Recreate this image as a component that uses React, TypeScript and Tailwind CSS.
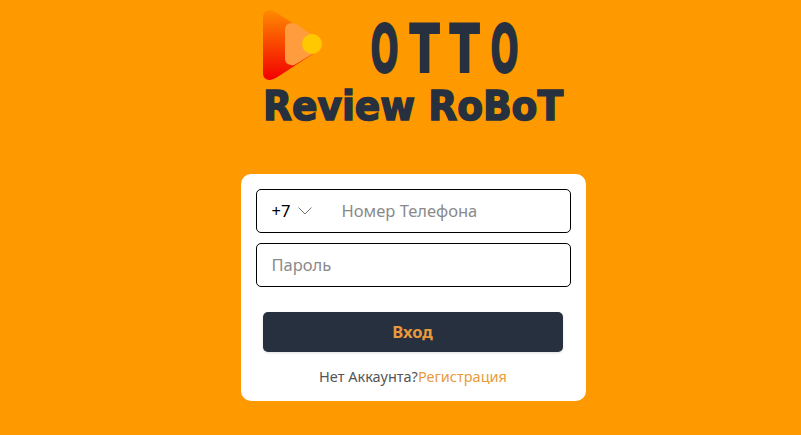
const Logo = () => (
  <div className="flex flex-col w-[300px] h-[124px] pt-[10px]">
    <div className="flex h-[74px] items-start">
      <svg width="62" height="72" viewBox="0 0 62 72" className="shrink-0">
        <defs>
          <linearGradient id="play" x1="0" y1="0" x2="0" y2="1">
            <stop offset="0" stopColor="#ff8a00" />
            <stop offset="1" stopColor="#f20000" />
          </linearGradient>
        </defs>
        <path d="M0 7 Q0 1 6 0 Q10 0 14 3 L56 30 Q61 35 56 40 L16 66 Q10 70 6 70 Q0 69 0 63 Z" fill="url(#play)" />
        <path d="M22 20 Q22 13 29 13 Q32 13 35 15 L56 30 Q61 35 56 40 L33 54 Q30 56 28 55 Q22 54 22 49 Z" fill="#ff9c3d" />
        <circle cx="49" cy="34" r="10" fill="#ffc800" />
      </svg>
      <div className="ml-[45px] mt-[14px] flex gap-[11px] font-['DejaVu_Sans',sans-serif] font-bold text-[#26303f] text-[66px] leading-[52px] [-webkit-text-stroke:2px_#26303f]">
        <span className="w-[29px] flex justify-center scale-x-[0.5]">O</span>
        <span className="w-[29px] flex justify-center scale-x-[0.66]">T</span>
        <span className="w-[29px] flex justify-center scale-x-[0.66]">T</span>
        <span className="w-[29px] flex justify-center scale-x-[0.5]">O</span>
      </div>
    </div>
    <div className="mt-[6px] h-[36px] font-['DejaVu_Sans',sans-serif] font-bold text-[#26303f] text-[40px] leading-[36px] whitespace-nowrap origin-left scale-x-[0.94] [-webkit-text-stroke:1.5px_#26303f]">
      Review RoBoT
    </div>
  </div>
)

const App = () => {
  return (
    <div className="w-[801px] h-[435px] overflow-hidden bg-[#ff9900] flex flex-col items-center pl-[25px] font-['Noto_Sans',sans-serif]">
      <Logo />
      <div className="mt-[50px] w-[345px] h-[227px] bg-white rounded-[10px] px-[15px] pt-[15px] flex flex-col">
        <div className="h-[44px] border border-black rounded-[5px] flex items-center pl-[15px] text-[16.5px]">
          <span className="text-black w-[20px]">+7</span>
          <svg width="14" height="8" viewBox="0 0 14 8" fill="none" className="ml-[6px]">
            <path d="M0.5 0.5 L7 7 L13.5 0.5" stroke="#777777" strokeWidth="1" />
          </svg>
          <span className="ml-[30px] text-[#8a8a8a]">Номер Телефона</span>
        </div>
        <div className="mt-[10px] h-[44px] border border-black rounded-[5px] flex items-center pl-[15px] text-[16.5px] text-[#8a8a8a]">
          Пароль
        </div>
        <button className="mt-[25px] ml-[7px] mr-[8px] h-[40px] bg-[#26303f] rounded-[5px] text-[#e99a3d] font-bold text-[16.5px] shadow-sm">
          Вход
        </button>
        <div className="mt-[14px] text-center text-[14.5px] text-[#555555]">
          Нет Аккаунта?<span className="text-[#e99a3d]">Регистрация</span>
        </div>
      </div>
    </div>
  )
}

export default App
